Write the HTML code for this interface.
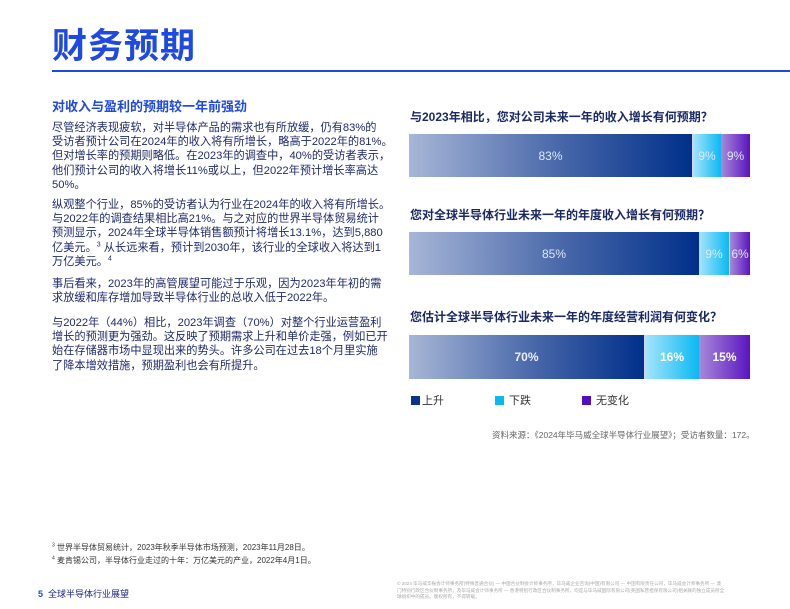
<!DOCTYPE html>
<html><head><meta charset="utf-8">
<style>
*{margin:0;padding:0;box-sizing:border-box}
body{width:790px;height:609px;background:#fff;position:relative;overflow:hidden;font-family:"Liberation Sans","Noto Sans CJK SC",sans-serif;color:#1f2a6b}
.a{position:absolute;white-space:nowrap}
.t{left:52px;top:18px;font-size:35px;font-weight:bold;color:#1e49e2;letter-spacing:1px}
.hr{left:52px;top:70px;width:738px;height:2px;background:#1e49e2}
.h{left:52px;top:96px;font-size:13px;font-weight:bold;color:#1e49e2}
.p{left:52px;font-size:11.2px;line-height:14.2px;color:#1f2a6b}
.q{left:410px;font-size:12px;font-weight:bold;color:#1a2a66}
.bar{position:absolute;left:409px;width:341px;display:flex}
.bar div{height:100%;display:flex;align-items:center;justify-content:center;color:#dfe6f8;font-size:12px}
.g1{background:linear-gradient(90deg,#a7b6d7,#4565a8 55%,#00308a)}
.g2{background:linear-gradient(90deg,#a6e5fb,#0ab9f2)}
.g3{background:linear-gradient(90deg,#a889d9,#5a14c0)}
.sep{border-left:1px solid #cfd8ee}
.lg{top:392px;font-size:11px;color:#333}
.sq{display:inline-block;width:9px;height:9px;vertical-align:-1px;margin-right:2px}
sup{font-size:7px;line-height:0}
</style></head><body>
<div class="a t">财务预期</div>
<div class="a hr"></div>
<div class="a h">对收入与盈利的预期较一年前强劲</div>
<div class="a p" style="top:121px">尽管经济表现疲软，对半导体产品的需求也有所放缓，仍有83%的<br>受访者预计公司在2024年的收入将有所增长，略高于2022年的81%。<br>但对增长率的预期则略低。在2023年的调查中，40%的受访者表示，<br>他们预计公司的收入将增长11%或以上，但2022年预计增长率高达<br>50%。</div>
<div class="a p" style="top:198px">纵观整个行业，85%的受访者认为行业在2024年的收入将有所增长。<br>与2022年的调查结果相比高21%。与之对应的世界半导体贸易统计<br>预测显示，2024年全球半导体销售额预计将增长13.1%，达到5,880<br>亿美元。<sup>3</sup> 从长远来看，预计到2030年，该行业的全球收入将达到1<br>万亿美元。<sup>4</sup></div>
<div class="a p" style="top:277px">事后看来，2023年的高管展望可能过于乐观，因为2023年年初的需<br>求放缓和库存增加导致半导体行业的总收入低于2022年。</div>
<div class="a p" style="top:316px">与2022年（44%）相比，2023年调查（70%）对整个行业运营盈利<br>增长的预测更为强劲。这反映了预期需求上升和单价走强，例如已开<br>始在存储器市场中显现出来的势头。许多公司在过去18个月里实施<br>了降本增效措施，预期盈利也会有所提升。</div>

<div class="a q" style="top:108px">与2023年相比，您对公司未来一年的收入增长有何预期？</div>
<div class="bar" style="top:134px;height:43px"><div class="g1" style="width:283px">83%</div><div class="g2 sep" style="width:29px">9%</div><div class="g3" style="width:29px">9%</div></div>
<div class="a q" style="top:206px">您对全球半导体行业未来一年的年度收入增长有何预期？</div>
<div class="bar" style="top:232px;height:43px"><div class="g1" style="width:290px">85%</div><div class="g2" style="width:30px">9%</div><div class="g3 sep" style="width:21px">6%</div></div>
<div class="a q" style="top:308px">您估计全球半导体行业未来一年的年度经营利润有何变化？</div>
<div class="bar" style="top:335px;height:44px"><div class="g1" style="width:235px;font-weight:bold;color:#eef">70%</div><div class="g2 sep" style="width:55px;font-weight:bold;color:#fff">16%</div><div class="g3" style="width:51px;font-weight:bold;color:#fff">15%</div></div>
<div class="a lg" style="left:411px"><span class="sq" style="background:#0a3390"></span>上升</div>
<div class="a lg" style="left:495px"><span class="sq" style="background:#0ab9f2"></span> 下跌</div>
<div class="a lg" style="left:582px"><span class="sq" style="background:#5010c0"></span> 无变化</div>
<div class="a" style="left:492px;top:429px;font-size:8.5px;color:#666">资料来源：《2024年毕马威全球半导体行业展望》；受访者数量：172。</div>

<div class="a" style="left:52px;top:542px;font-size:8px;color:#333"><sup style="font-size:5px">3</sup> 世界半导体贸易统计，2023年秋季半导体市场预测，2023年11月28日。</div>
<div class="a" style="left:52px;top:555px;font-size:8px;color:#333"><sup style="font-size:5px">4</sup> 麦肯锡公司，半导体行业走过的十年：万亿美元的产业，2022年4月1日。</div>
<div class="a" style="left:38px;top:587px;font-size:9px;color:#1e2a8a"><b style="color:#1e49e2">5</b>&nbsp; 全球半导体行业展望</div>
<div class="a" style="left:397px;top:581px;font-size:4.6px;line-height:6.5px;color:#aaa">© 2024 毕马威华振会计师事务所(特殊普通合伙) — 中国合伙制会计师事务所，毕马威企业咨询(中国)有限公司 — 中国有限责任公司，毕马威会计师事务所 — 澳<br>门特别行政区合伙制事务所，及毕马威会计师事务所 — 香港特别行政区合伙制事务所，均是与毕马威国际有限公司(英国私营担保有限公司)相关联的独立成员所全<br>球组织中的成员。版权所有，不得转载。</div>
</body></html>
